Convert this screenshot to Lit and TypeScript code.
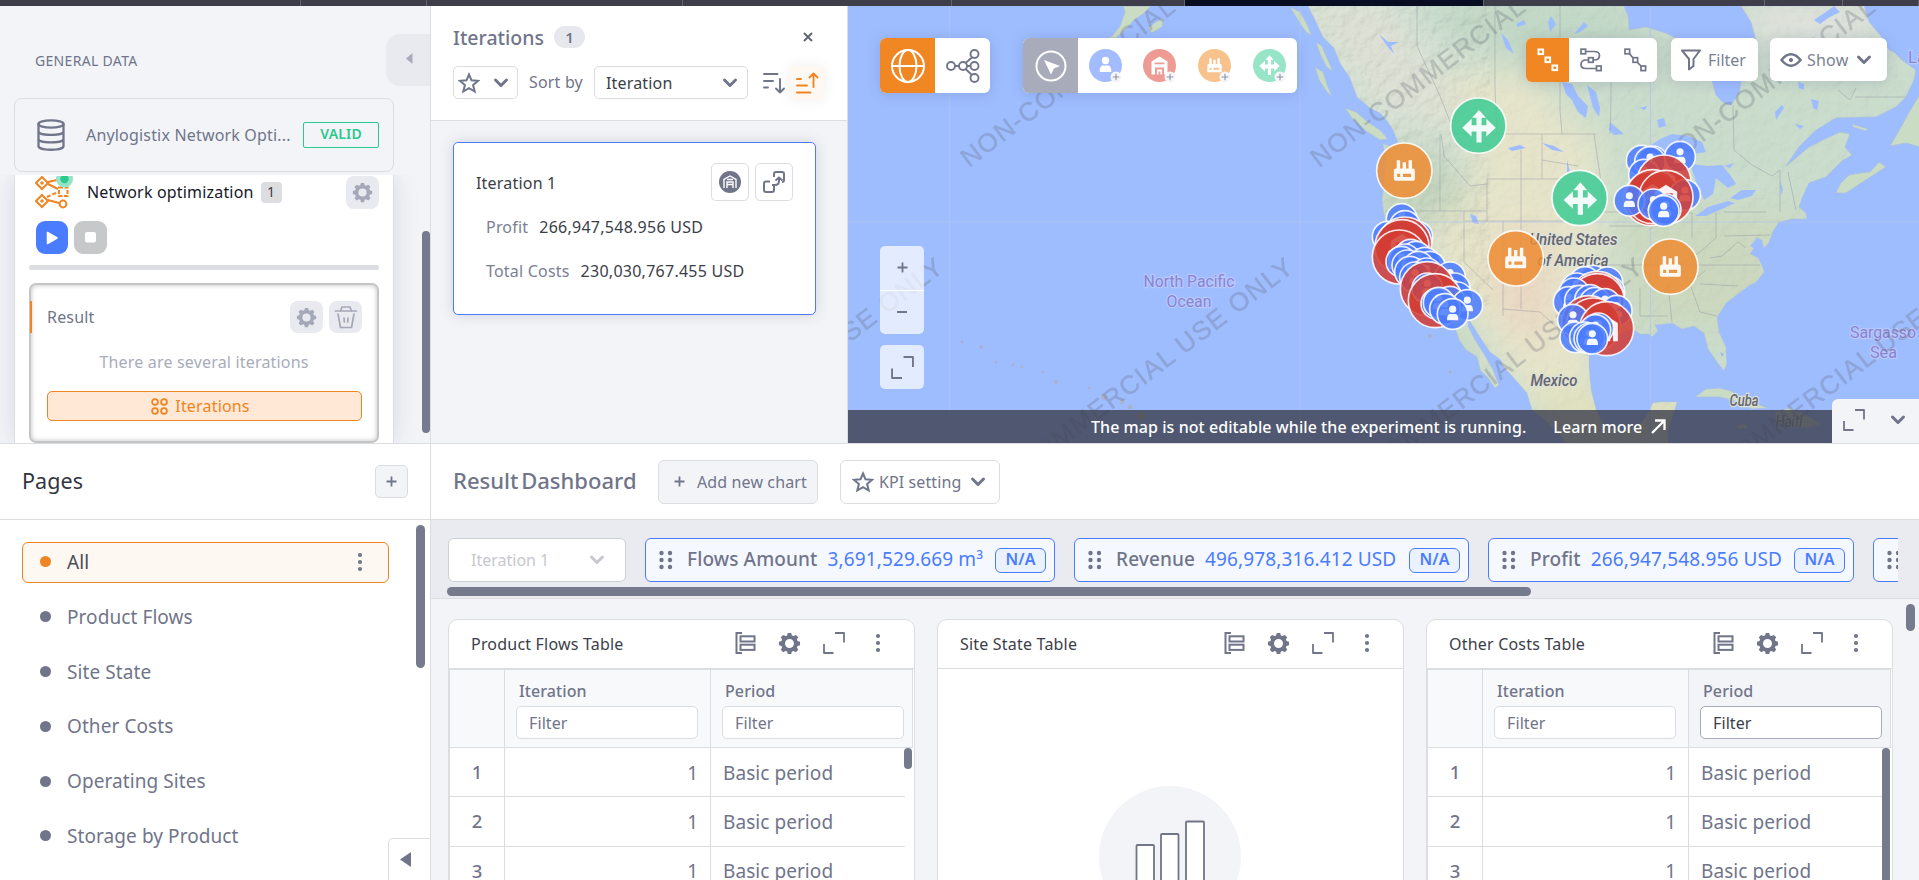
import { LitElement, html, svg, css } from "lit";
import { customElement, property } from "lit/decorators.js";

const base = css`
  * { box-sizing: border-box; }
  svg { display: block; flex: none; }
  .ic { fill: none; stroke: currentColor; stroke-width: 2; stroke-linecap: round; stroke-linejoin: round; }
`;

/* ---------- shared icons ---------- */
const gearPath =
  "M10.2 1h3.6l.7 2.6 1.7.7L18.6 3l2.500 2.500-1.400 2.300.7 1.700 2.600.7v3.600l-2.600.7-.7 1.700 1.400 2.300-2.500 2.500-2.400-1.300-1.700.7-.7 2.600h-3.600l-.7-2.600-1.700-.7L5.400 21l-2.500-2.500 1.400-2.300-.7-1.700L1 13.800v-3.600l2.600-.7.7-1.700L2.900 5.500 5.400 3l2.400 1.300 1.700-.7zM12 7.300a4.700 4.700 0 1 0 0 9.400 4.700 4.700 0 0 0 0-9.400z";
const gear = (s: number) =>
  html`<svg width=${s} height=${s} viewBox="0 0 24 24"><path fill="currentColor" fill-rule="evenodd" d=${gearPath} /></svg>`;
const chevron = (w = 15) =>
  html`<svg class="ic" style="stroke-width:3" width=${w} height=${w} viewBox="0 0 16 16"><path d="M2.500 5 L8 10.500 L13.500 5" /></svg>`;
const star = (w: number) =>
  html`<svg class="ic" style="stroke-linejoin:miter" width=${w} height=${w} viewBox="0 0 22 22"><path d="M11 2.500 L13.500 8.300 L20 8.800 L15.100 13 L16.700 19.500 L11 16.100 L5.300 19.500 L6.900 13 L2 8.800 L8.500 8.300 Z" /></svg>`;
const plus = (s = 11) =>
  html`<svg width=${s} height=${s} viewBox="0 0 11 11" fill="none" stroke="currentColor" stroke-width="1.800"><path d="M5.500 0.500V10.500M0.500 5.500H10.500" /></svg>`;
const expand = (s = 22) =>
  html`<svg width=${s} height=${s} viewBox="0 0 22 22" fill="none" stroke="currentColor" stroke-width="1.800" stroke-linejoin="round"><path d="M12 1H21V10.500M1 12V21H10.500" /></svg>`;
const dotsV = html`<svg width="6" height="20" viewBox="0 0 6 20" fill="#70758a"><circle cx="3" cy="3" r="2.100" /><circle cx="3" cy="10" r="2.100" /><circle cx="3" cy="17" r="2.100" /></svg>`;
const grip = html`<svg width="14" height="20" viewBox="0 0 14 20" fill="currentColor"><circle cx="2.500" cy="3" r="2.200"/><circle cx="2.500" cy="10" r="2.200"/><circle cx="2.500" cy="17" r="2.200"/><circle cx="11" cy="3" r="2.200"/><circle cx="11" cy="10" r="2.200"/><circle cx="11" cy="17" r="2.200"/></svg>`;
const gridIc = html`<svg width="21" height="22" viewBox="0 0 21 22" fill="none" stroke="currentColor" stroke-width="2"><path d="M7 1H1.500V21H7" /><rect x="5.500" y="4.300" width="14" height="5.200" /><rect x="5.500" y="12.700" width="14" height="5.200" /></svg>`;

/* ---------- marker glyphs, drawn around 0,0 ---------- */
const person = svg`<circle cx="0" cy="-5" r="3.700"/><path d="M-5.800 6.500V4.500Q-5.300 0 -2.600 0H2.600Q5.300 0 5.800 4.500V6.500Z"/>`;
const factory = svg`<path fill-rule="evenodd" d="M-10 0Q-10 -2 -8 -2H-7.300V-10H-4V-2H-1.600V-8H1.600V-2H4V-10H7.300V-2H8Q10 -2 10 0V8Q10 9.500 8.500 9.500H-8.500Q-10 9.500 -10 8ZM-6.800 3V6H-4V3ZM-1.300 3V6H6.500V3Z"/>`;
const arrows = svg`<path d="M0 -17L7 -9H2.600V-1.500H7.500V-8L17 1L7.500 10V5H2.600V16H-2.600V5H-7.500V10L-17 1L-7.500 -8V-1.500H-2.600V-9H-7Z"/>`;
const house = svg`<path fill-rule="evenodd" d="M-8 9V-4L0 -9L8 -4V9H4.500V2H-4.500V9ZM-4.800 -3V-1.300H4.800V-3ZM-2.600 4H2.600V9H0.900V6H-0.900V9H-2.600Z"/>`;

type Dot = [string, number, number];
const radius: Record<string, number> = { b: 46, r: 81, o: 83, g: 83 };
const fills: Record<string, string> = { b: "#4a7cff", r: "#d33d33", o: "#ee8d33", g: "#3fcc94" };
const sites: Dot[] = [
  ["g", 355, 137], ["o", 133, 272], ["g", 659, 354], ["o", 467, 535], ["o", 931, 560],
  ["b", 845, 242], ["b", 878, 244], ["b", 870, 246], ["b", 960, 230], ["b", 852, 284],
  ["r", 912, 306], ["r", 872, 356], ["r", 878, 350], ["b", 975, 345], ["r", 918, 352], ["b", 808, 362],
  ["b", 880, 373], ["b", 917, 388], ["b", 911, 393],
  ["b", 125, 417], ["b", 135, 438], ["b", 83, 470], ["b", 172, 470], ["b", 120, 470],
  ["r", 134, 492], ["r", 126, 500], ["r", 118, 531],
  ["b", 152, 524], ["b", 168, 530], ["b", 135, 538], ["b", 124, 545], ["b", 195, 548], ["b", 210, 560], ["b", 142, 556],
  ["b", 175, 560], ["b", 150, 575], ["b", 200, 580], ["b", 165, 592],
  ["b", 270, 592], ["b", 284, 625], ["b", 292, 652], ["r", 202, 626], ["b", 202, 625], ["r", 226, 662], ["b", 270, 665], ["b", 322, 675],
  ["b", 229, 671], ["b", 236, 668], ["b", 255, 687], ["b", 278, 702],
  ["b", 700, 602], ["b", 675, 606], ["b", 742, 607], ["b", 650, 625], ["b", 748, 635],
  ["r", 712, 655], ["r", 712, 662], ["b", 642, 640], ["b", 626, 666], ["b", 660, 662], ["b", 690, 660], ["b", 705, 668], ["b", 735, 672], ["b", 770, 692],
  ["r", 686, 728], ["r", 700, 735], ["b", 639, 719], ["r", 740, 746],
  ["b", 646, 772], ["b", 715, 745], ["b", 706, 750], ["b", 675, 772], ["b", 688, 775], ["b", 697, 776],
];
const glyphFor: Record<string, unknown> = {
  b: svg`<g transform="scale(2.900)">${person}</g>`,
  r: svg`<g transform="scale(4.200)">${house}</g>`,
  o: svg`<g transform="scale(3.150)">${factory}</g>`,
  g: svg`<g transform="translate(2 3) scale(2.950)">${arrows}</g>`,
};

const tiles: [number, number][] = [];
for (const x of [619, 969, 1319, 1669]) for (const y of [168, 518]) tiles.push([x, y]);

const land =
  "M1308 6L1316 22 1323 37 1334 48 1340 63 1350 78 1357 97 1370 108 1380 113 1388 122 1393 130 1398 142 1390 146 1383 144 1386 160 1385 178 1382 200 1384 214 1389 232 1394 246 1405 268 1428 288 1444 306 1455 328 1459 340 1466 350 1477 357 1480 370 1488 378 1495 388 1499 385 1492 368 1484 354 1475 340 1468 326 1468 318 1478 334 1490 352 1501 360 1503 366 1513 377 1527 393 1532 410 1545 420 1560 434 1566 444H1668L1668 430 1674 412 1677 402 1662 402 1653 403 1649 412 1640 425 1625 430 1605 427 1596 410 1591 390 1589 367 1589 356 1598 343 1614 336 1632 329 1640 334 1649 334 1652 337 1658 331 1655 325 1672 323 1682 329 1694 326 1704 333 1708 349 1719 365 1724 371 1727 364 1726 347 1719 332 1717 317 1726 303 1739 293 1750 285 1756 282 1764 272 1762 266 1758 258 1750 254 1755 246 1756 237 1762 240 1764 248 1769 242 1773 231 1779 222 1792 219 1807 219 1806 213 1799 207 1803 196 1809 183 1826 177 1842 161 1852 155 1845 147 1850 134 1840 132 1829 137 1809 147 1786 166 1799 147 1815 131 1826 124 1836 118 1876 117 1896 107 1906 97 1914 80 1916 70 1902 60 1894 52 1889 50 1881 36 1869 22 1864 6H1741L1751 22 1756 40 1750 60 1742 76 1739 93 1731 105 1724 103 1716 95 1712 80 1690 60 1680 40 1666 33 1646 27 1629 30 1628 16 1624 6Z";

@customElement("world-map")
export class WorldMap extends LitElement {
  static styles = [base, css`
    :host { display: block; width: 1071px; height: 437px; overflow: hidden; }
    .wm { font-family: "Liberation Sans", Arial, sans-serif; font-size: 26px; fill: #5f6472; stroke: #5f6472; stroke-width: .5; opacity: .27; }
    .sea { font-family: Roboto, sans-serif; font-size: 16.500px; fill: #8a84d2; stroke: #b9c9fc; stroke-width: 2.500; paint-order: stroke; text-anchor: middle; }
    .country { font-family: Roboto, sans-serif; font-size: 16.500px; font-weight: 500; font-style: italic; fill: #65656f; stroke: #dde2d8; stroke-width: 2.500; paint-order: stroke; text-anchor: middle; }
    .water { fill: #9ebdff; }
    .border { fill: none; stroke: #92909f; stroke-width: 1; opacity: .42; }
  `];
  render() {
    return html`<svg width="1071" height="437" viewBox="848 6 1071 437">
      <defs>
        <clipPath id="landclip"><path d=${land} /></clipPath>
        <filter id="soft" x="-50%" y="-50%" width="200%" height="200%"><feGaussianBlur stdDeviation="16" /></filter>
        <filter id="relief" x="0" y="0" width="100%" height="100%">
          <feTurbulence type="fractalNoise" baseFrequency=".09" numOctaves="4" seed="7" result="n" />
          <feDiffuseLighting in="n" surfaceScale="2.200" diffuseConstant="1.050" lighting-color="#fff"><feDistantLight azimuth="225" elevation="55" /></feDiffuseLighting>
        </filter>
      </defs>
      <rect x="848" y="6" width="1071" height="437" fill="#9ebdff" />
      <path d=${land} fill="#c6dac8" stroke="#a9bfe0" stroke-width="1" />
      <g clip-path="url(#landclip)">
        <g filter="url(#soft)">
          <path fill="#dfe2d6" d="M1300 0H1380L1470 110 1440 130 1380 110Z" />
          <path fill="#c2d8c6" d="M1400 0H1640V60L1560 70 1470 50Z" />
          <path fill="#e6e5cb" d="M1445 75L1530 70 1560 110 1600 140 1605 250 1590 320 1600 420 1530 410 1480 330 1440 290 1420 240 1440 190 1480 180Z" />
          <path fill="#c4d6c0" d="M1380 140L1440 150 1470 200 1420 230 1380 220Z" />
          <path fill="#ead9c4" d="M1500 230H1550V320L1530 350 1490 300Z" />
          <path fill="#ccd9c0" d="M1620 210H1800V330H1630Z" />
          <path fill="#dfe2dc" d="M1740 0H1880V50H1760Z" />
          <path fill="#dfe1bd" d="M1540 390H1690V450H1550Z" />
        </g>
        <rect x="1290" y="6" width="200" height="300" filter="url(#relief)" opacity=".26" style="mix-blend-mode:multiply" />
        <rect x="1480" y="6" width="439" height="437" filter="url(#relief)" opacity=".1" style="mix-blend-mode:multiply" />
      </g>
      <g fill="#cbdcc4" stroke="#a9bfe0" stroke-width=".8">
        <path d="M1345 108L1356 112 1368 122 1380 130 1388 139 1380 140 1366 131 1352 118Z" />
        <path d="M1315 67L1323 72 1327 84 1332 97 1327 92 1319 80Z" />
        <path d="M1290 7L1300 12 1306 22 1312 36 1306 32 1299 22Z" />
        <path d="M1316 42L1322 46 1328 60 1333 72 1326 66 1320 54Z" />
        <path d="M1836 193L1840 184 1849 175 1860 173 1870 172 1879 162 1886 167 1872 176 1858 185 1846 193Z" />
        <path d="M1920 94L1908 114 1901 127 1890 146 1906 143 1920 147Z" />
        <path d="M1852 124L1868 129 1866 131 1853 127Z" />
        <path d="M1100 43L1112 36 1120 26 1125 12 1123 6H1151L1143 14 1134 20 1126 29 1116 38 1107 45Z" />
        <path d="M1148 28L1156 22 1163 18 1162 27 1152 33Z" />
        <path d="M1695 397L1706 389 1720 388 1731 391 1742 397 1760 405 1768 408 1752 409 1735 401 1720 397Z" />
        <path d="M1775 412L1790 408 1808 416 1822 424 1806 428 1790 426 1776 424Z" />
        <path d="M1736 425L1745 424 1748 428 1738 429Z" />
      </g>
      <g class="water">
        <path d="M1644 150L1660 139 1672 134 1688 136 1702 142 1706 152 1694 154 1680 148 1668 158 1652 156Z" />
        <path d="M1690 164L1708 166 1722 165 1731 176 1736 184 1728 188 1716 178 1713 194 1704 200 1697 184Z" />
        <path d="M1664 170L1676 166 1672 200 1662 214 1656 200Z" />
        <path d="M1695 216L1708 207 1728 201 1735 203 1722 209 1706 216Z" />
        <path d="M1730 198L1742 190 1756 190 1752 196 1738 200Z" />
        <path d="M1562 82L1572 84 1578 96 1588 106 1586 118 1578 112 1572 100 1566 94Z" />
        <path d="M1587 85L1596 92 1600 108 1599 117 1593 108Z" />
        <path d="M1379 34L1388 42 1399 42 1391 46 1394 54 1387 46Z" />
        <path d="M1501 33L1508 40 1514 54 1506 48Z" /><path d="M1516 24L1524 20 1526 24 1518 27Z" />
        <path d="M1574 34L1584 22 1588 26 1580 32Z" /><path d="M1551 16L1556 24 1550 32 1548 22Z" />
        <path d="M1610 122L1617 128 1624 134 1614 135 1609 130Z" /><path d="M1657 120L1664 118 1666 126 1659 128Z" />
        <path d="M1508 148L1520 145 1526 148 1512 151Z" /><path d="M1542 143L1554 146 1564 152 1552 150Z" />
        <path d="M1470 214L1476 216 1479 224 1473 223Z" /><path d="M1567 160L1570 172 1567 176Z" />
        <path d="M1775 112L1782 105 1784 108 1776 120Z" /><path d="M1811 99L1819 101 1817 110 1813 108Z" />
        <path d="M1798 82L1804 84 1804 90 1799 88Z" /><path d="M1795 124L1804 126 1800 129Z" />
        <path d="M1639 108L1647 106 1645 110Z" /><path d="M1724 166L1734 163 1730 168Z" />
        <path d="M1757 238L1761 244 1760 258 1756 250 1750 246Z" /><path d="M1780 180L1783 190 1781 195Z" />
        <path d="M1814 20L1826 12 1834 6 1840 12 1828 18 1820 24Z" /><path d="M1720 352L1724 354 1722 357Z" />
      </g>
      <path class="border" d="M1417 6V46L1440 96 1455 134H1596M1495 6V90L1497 134M1542 134V179H1580M1487 179H1542M1487 179V221H1465M1441 134L1444 156 1458 172 1470 186 1487 184M1440 134V211M1386 211H1487M1464 211V262L1493 290M1487 221H1521V309M1503 221V316M1521 221H1570M1521 221V150M1503 309L1540 312 1560 330 1588 356M1560 6V110L1562 134M1542 160L1578 166M1594 134L1600 175 1604 212H1640M1609 226H1650M1610 134L1611 100V80L1640 60M1598 265H1760M1640 288V316H1668M1668 284L1672 322M1690 284L1700 312 1717 316M1649 230L1668 214 1692 213V214M1692 214V238M1716 212V238L1700 252 1672 270M1724 212H1766M1724 236L1770 235M1733 105L1734 150 1752 165 1772 176 1780 170M1780 170V212M1788 172L1796 210M1700 284L1738 286M1838 90L1850 100 1856 88M1855 97H1906M1690 283L1706 270M1710 258L1722 256 1738 242 1746 248M1620 316H1590" />
      <g fill="#abb2c6" opacity=".85"><circle cx="962" cy="342" r="1.500"/><circle cx="981" cy="347" r="2"/><circle cx="996" cy="362" r="1.500"/><circle cx="1013" cy="365" r="1.500"/><circle cx="1022" cy="367" r="1.500"/><circle cx="1043" cy="372" r="1.500"/><circle cx="1056" cy="382" r="2"/><circle cx="1089" cy="388" r="1.500"/><circle cx="1104" cy="397" r="3"/><circle cx="1122" cy="402" r="2.500"/><circle cx="1130" cy="407" r="2.500"/><circle cx="1141" cy="416" r="4" fill="#c9b98f"/><circle cx="1430" cy="336" r="2"/><circle cx="1450" cy="372" r="1.500"/></g>
      <path d="M949.500 6V443M1300 6V443M1650.500 6V443M848 222H1919" stroke="#b3c5ef" stroke-width="1.200" opacity=".7" />
      <text class="country" x="1573.500" y="245" textLength="88" lengthAdjust="spacingAndGlyphs">United States</text>
      <text class="country" x="1573" y="266" textLength="71" lengthAdjust="spacingAndGlyphs">of America</text>
      <text class="country" x="1554" y="386" textLength="47" lengthAdjust="spacingAndGlyphs">Mexico</text>
      <text class="country" x="1744" y="406" textLength="29" lengthAdjust="spacingAndGlyphs">Cuba</text>
      <text class="country" x="1789" y="427" textLength="27" lengthAdjust="spacingAndGlyphs" opacity=".6">Haiti</text>
      <text class="sea" x="1189" y="287" textLength="91" lengthAdjust="spacingAndGlyphs">North Pacific</text>
      <text class="sea" x="1189" y="307" textLength="45" lengthAdjust="spacingAndGlyphs">Ocean</text>
      <text class="sea" x="1883" y="338" textLength="66" lengthAdjust="spacingAndGlyphs">Sargasso</text>
      <text class="sea" x="1883.500" y="358" textLength="27" lengthAdjust="spacingAndGlyphs">Sea</text>
      <text class="sea" x="1917" y="63">La</text>
      ${tiles.map(([x, y]) => svg`<text class="wm" transform="translate(${x} ${y}) rotate(-37.200)" textLength="409">NON-COMMERCIAL USE ONLY</text>`)}
      <g transform="translate(1360 80) scale(.33333)">
        ${sites.map(([k, x, y]) => svg`<g transform="translate(${x} ${y})"><circle r=${radius[k]} fill=${fills[k]} fill-opacity=".86" stroke="#fff" stroke-opacity=".88" stroke-width="5"/><g fill="#fff" fill-opacity=".93">${glyphFor[k]}</g></g>`)}
      </g>
    </svg>`;
  }
}

interface Table { title: string; kind: "rows" | "empty"; active?: boolean; }

@customElement("chart-card")
export class ChartCard extends LitElement {
  @property({ attribute: false }) table!: Table;
  static styles = [base, css`
    :host { display: block; width: 467px; flex: none; }
    .card { height: 300px; background: #fff; border: 1px solid #dcdde1; border-radius: 10px 10px 0 0; color: #70758a; }
    .head { height: 49px; display: flex; align-items: center; padding: 0 33px 0 22px; border-bottom: 1px solid #dcdde1; font-size: 16px; color: #3b3e48; letter-spacing: .2px; }
    .head span { flex: 1; }
    .icons { display: flex; align-items: center; color: #70758a; padding-bottom: 2px; }
    .icons > :nth-child(2) { margin-left: 22px; } .icons > :nth-child(3) { margin-left: 22px; } .icons > :nth-child(4) { margin-left: 30px; }
    .body { display: grid; grid-template-columns: 55px 206px 202px; border-top: 1px solid #dcdde1; border-left: 1px solid #dcdde1; width: 464px; }
    .th { height: 78px; background: #f8f9fb; border-right: 1px solid #dcdde1; border-bottom: 1px solid #dcdde1; padding: 10px 11px 0 11px; font-size: 16px; font-weight: 500; }
    .th label { display: block; line-height: 23px; padding-left: 3px; height: 26px; letter-spacing: .1px; }
    .inp { height: 33px; width: 182px; border: 1px solid #dcdde1; border-radius: 5px; background: #fff; padding-left: 12px; line-height: 32px; font-weight: 400; letter-spacing: .1px; }
    .active { background: #f3f4f8; }
    .active .inp { border-color: #a9abba; color: #3b3e48; }
    .rows { display: flex; height: 133px; }
    .grid { display: grid; grid-template-columns: 55px 206px 194px; grid-auto-rows: 49.300px; border-left: 1px solid #dcdde1; overflow: hidden; }
    .td { border-right: 1px solid #dcdde1; border-bottom: 1px solid #dcdde1; font-size: 19px; display: flex; align-items: center; padding-top: 1px; }
    .n { justify-content: center; font-weight: 500; font-size: 18.500px; padding: 0 0 1px; }
    .r { justify-content: flex-end; padding-right: 12px; }
    .l { padding-left: 12px; border-right: 0; letter-spacing: .06px; }
    .bar { width: 8px; margin-left: -1px; border-radius: 4px; background: #757a8c; height: 21px; }
    .bar.long { height: 160px; }
    .empty { display: flex; justify-content: center; padding: 117px 2px 0 0; }
  `];
  render() {
    const t = this.table;
    return html`<div class="card">
      <div class="head"><span>${t.title}</span><div class="icons">${gridIc}${gear(23)}${expand(22)}${dotsV}</div></div>
      ${t.kind === "rows"
        ? html`<div class="body">
              <div class="th"></div>
              <div class="th"><label>Iteration</label><div class="inp">Filter</div></div>
              <div class="th ${t.active ? "active" : ""}"><label>Period</label><div class="inp">Filter</div></div>
            </div>
            <div class="rows">
              <div class="grid">${[1, 2, 3].map((n) => html`<div class="td n">${n}</div><div class="td r">1</div><div class="td l">Basic period</div>`)}</div>
              <div class="bar ${t.active ? "long" : ""}"></div>
            </div>`
        : html`<div class="empty"><svg width="142" height="142" viewBox="0 0 142 142"><circle cx="71" cy="71" r="71" fill="#f3f4f8" /><g fill="#fff" stroke="#70758a" stroke-width="1.800"><rect x="37.500" y="59" width="17.500" height="60" rx="1"/><rect x="62" y="48" width="17.500" height="71" rx="1"/><rect x="87" y="35.500" width="18" height="84" rx="1"/></g></svg></div>`}
    </div>`;
  }
}

const miniPin = (fill: string, glyph: unknown) => html`<svg width="35" height="35" viewBox="-17.500 -17.500 35 35">
  <circle r="16.500" fill=${fill} /><g fill="#fff">${glyph}</g>
  <circle cx="10.500" cy="11.500" r="5.500" fill="#f6f7fa" /><path d="M10.500 8.200V14.800M7.200 11.500H13.800" stroke="#8e93a3" stroke-width="1.100" /></svg>`;

@customElement("app-root")
export class AppRoot extends LitElement {
  static styles = [base, css`
    :host { display: grid; grid-template-columns: 1919px; grid-template-rows: 6px 437px 437px; width: 1919px; height: 880px; overflow: hidden; background: #f3f4f8; font-family: "Noto Sans", sans-serif; font-size: 16px; color: #70758a; }
    .top { display: flex; background: #3d3e4a; }
    .top i { border-right: 1px solid #62636e; }
    .top .on { background: #080d22; }
    .upper { display: flex; min-height: 0; border-bottom: 1px solid #dcdde1; height: 438px; }
    .lower { display: flex; min-height: 0; padding-top: 1px; }

    .side { width: 431px; border-right: 1px solid #dcdde1; display: flex; flex-direction: column; flex: none; overflow: hidden; letter-spacing: .18px; }
    .shead { height: 169px; flex: none; background: #f3f4f8; z-index: 1; }
    .srow { display: flex; justify-content: space-between; padding: 28px 0 0 35px; height: 92px; }
    .srow span { font-size: 14px; line-height: 20px; padding-top: 17px; letter-spacing: .32px; }
    .tab { width: 44px; height: 52px; border-radius: 14px 0 0 14px; background: #e9eaef; color: #a9acba; padding: 19px 0 0 19px; }
    .project { margin-left: 14px; width: 380px; height: 74px; border: 1px solid #dcdde1; border-radius: 8px; display: flex; align-items: center; padding: 0 14px 0 22px; }
    .project .nm { flex: 1; margin-left: 21px; white-space: nowrap; }
    .valid { width: 76px; height: 26px; border: 1px solid #2bc88f; border-radius: 2px; color: #2bc88f; font-size: 14px; font-weight: 600; display: flex; align-items: center; justify-content: center; padding-bottom: 3px; }
    .sbody { display: flex; flex: 1; justify-content: space-between; padding-left: 14px; overflow: hidden; }
    .exp { width: 380px; background: #fff; border: solid #dcdde1; border-width: 0 1px; padding: 1px 14px 0; box-shadow: 0 0 24px rgba(60,64,90,.13); overflow: hidden; height: 268px; }
    .track { width: 8px; height: 202px; margin-top: 56px; background: #757a8c; border-radius: 4px; }
    .row { display: flex; align-items: center; }
    .sq { width: 33px; height: 33px; border-radius: 8px; background: #e9eaef; color: #a5a8b8; display: flex; align-items: center; justify-content: center; }
    .exp .nm { color: #17182a; padding-bottom: 1px; }
    .cnt { margin-left: 7px; width: 21px; height: 21px; border-radius: 4px; background: #dcdde0; color: #3b3e48; font-size: 14px; line-height: 20px; text-align: center; margin-right: auto; }
    .runs { display: flex; gap: 6px; padding: 12px 0 0 7px; }
    .run { width: 33px; height: 33px; border-radius: 9px; display: flex; align-items: center; justify-content: center; background: #c6c8c9; }
    .run.play { background: #4a7cff; width: 32px; }
    .prog { height: 5px; border-radius: 3px; background: #dcdde0; margin-top: 11px; }
    .result { margin-top: 13px; height: 160px; width: 350px; border: 2px solid #c4c5c6; border-radius: 7px; box-shadow: inset 0 0 5px rgba(0,0,0,.25); padding: 16px 15px 0 0; }
    .rt { display: flex; height: 32px; gap: 6px; border-left: 2px solid #ef8522; margin-left: -1px; padding-left: 15px; align-items: center; }
    .rt .sq { height: 32px; }
    .rt span { flex: 1; }
    .msg { text-align: center; color: #a9acba; margin: 18px 0 0 15px; line-height: 22px; }
    .itb { height: 30px; margin: 18px 0 0 16px; border: 1px solid #ef8522; border-radius: 5px; background: #ffe8d5; color: #ef8522; display: flex; align-items: center; justify-content: center; gap: 7px; padding-right: 8px; }

    .iter { width: 417px; flex: none; border-right: 1px solid #dcdde1; }
    .ihead { height: 115px; border-bottom: 1px solid #dcdde1; background: #fff; padding: 19px 22px 0; }
    .ititle { display: flex; align-items: center; height: 24px; font-size: 19.500px; font-weight: 500; }
    .ititle b { margin-left: 10px; width: 31px; height: 22px; border-radius: 11px; background: #e7e8ed; font-size: 15px; font-weight: 600; line-height: 22px; text-align: center; margin-right: auto; }
    .box { border: 1px solid #dcdde1; border-radius: 5px; background: #fff; display: flex; align-items: center; }
    .tools { display: flex; align-items: center; margin-top: 17px; height: 33px; letter-spacing: .18px; }
    .hl { width: 34px; height: 33px; background: #fef8f2; box-shadow: 0 0 14px rgba(0,0,0,.07); color: #ef8522; display: flex; align-items: center; justify-content: center; }
    .icard { margin: 21px 0 0 22px; width: 363px; height: 173px; border: 1px solid #4a7cff; border-radius: 5px; background: #fff; box-shadow: 0 0 14px rgba(60,64,90,.18); padding: 20px 22px 0 22px; color: #3b3e48; letter-spacing: .2px; }
    .icard .ir { display: flex; align-items: center; gap: 6px; height: 38px; }
    .icard .ir span { flex: 1; padding-top: 1px; }
    .icard .ib { width: 38px; height: 38px; justify-content: center; color: #70758a; }
    .kv { display: flex; gap: 11px; padding-left: 10px; line-height: 22px; margin-top: 22px; }
    .kv.first { margin-top: 15px; }
    .kv b { font-weight: 400; letter-spacing: .26px; }
    .kv i { font-style: normal; color: #7c8094; letter-spacing: .2px; }

    .mapw { position: relative; width: 1071px; height: 437px; }
    .over { position: absolute; display: flex; }
    .tb { border-radius: 6px; background: #fff; overflow: hidden; box-shadow: 0 1px 14px rgba(50,60,110,.18); }
    .c { display: flex; align-items: center; justify-content: center; height: 100%; }
    .or { background: #f08722; color: #fff; }
    .gr { background: #a7abba; color: #fff; }
    .zoom { flex-direction: column; width: 44px; background: rgba(255,255,255,.7); border-radius: 5px; }
    .zoom .c + .c { border-top: 1px solid #fff; }
    .notice { left: 0; right: 0; bottom: 0; height: 33px; background: rgba(60,63,78,.8); color: #fff; font-weight: 500; align-items: center; padding-left: 243px; white-space: nowrap; letter-spacing: .06px; }
    .corner { right: 0; bottom: 0; width: 87px; height: 44px; background: #f3f4f8; border-radius: 6px 0 0 0; align-items: center; padding: 0 13px 2px 11px; justify-content: space-between; }

    .pages { width: 431px; flex: none; border-right: 1px solid #dcdde1; background: #fff; position: relative; }
    .phead { height: 76px; border-bottom: 1px solid #dcdde1; display: flex; align-items: center; justify-content: space-between; padding: 0 22px 1px 22px; color: #33363f; }
    .phead span { font-size: 21.500px; line-height: 28px; padding-bottom: 1px; letter-spacing: .1px; }
    .add { width: 33px; height: 33px; border: 1px solid #dcdde1; border-radius: 5px; background: #f3f4f8; color: #70758a; display: flex; align-items: center; justify-content: center; }
    .plist { display: flex; justify-content: space-between; padding: 5px 5px 0 22px; }
    .pl { width: 367px; padding-top: 17px; display: flex; flex-direction: column; gap: 13.800px; }
    .p { height: 41px; border: 1px solid transparent; border-radius: 6px; display: flex; align-items: center; font-size: 19px; padding: 0 25px 1px 17px; gap: 16px; letter-spacing: .08px; }
    .p::before { content: ""; width: 11px; height: 11px; border-radius: 50%; background: #70758a; }
    .p.on { background: #fef8f2; border-color: #ef8522; color: #4a4d58; padding-bottom: 2px; }
    .p.on::before { background: #ef8522; }
    .p span { flex: 1; }
    .ptrack { width: 9px; height: 143px; border-radius: 5px; background: #757a8c; }
    .fold { position: absolute; right: 0; bottom: 0; width: 42px; height: 42px; border: solid #dcdde1; border-width: 1px 0 0 1px; border-radius: 5px 0 0 0; background: #fff; padding: 13px 0 0 11px; }

    .dash { flex: 1; min-width: 0; display: flex; flex-direction: column; }
    .dhead { height: 76px; flex: none; background: #fff; border-bottom: 1px solid #dcdde1; display: flex; align-items: center; padding-left: 22px; }
    .dhead h2 { margin: 0 23px 0 0; font-size: 22px; font-weight: 500; word-spacing: -3px; white-space: nowrap; width: 182px; letter-spacing: .01px; padding-bottom: 3px; }
    .btn { height: 44px; border: 1px solid #dcdde1; border-radius: 6px; display: flex; align-items: center; white-space: nowrap; }
    .kpis { height: 79px; flex: none; background: #eaebf0; border-bottom: 1px solid #dcdde1; padding: 18px 21px 0 17px; }
    .kl { display: flex; overflow: hidden; }
    .kl > * { flex: none; height: 44px; border-radius: 6px; display: flex; align-items: center; white-space: nowrap; }
    .sel { width: 178px; border: 1px solid #cfd0d3; background: #fff; color: #c6c8cd; padding: 0 20px 0 22px; justify-content: space-between; margin-right: 19px; }
    .k { border: 1px solid #4a7cff; background: #f5f8ff; font-size: 19px; padding: 0 8px 0 13px; margin-right: 19px; font-weight: 500; overflow: hidden; }
    .k span { margin: 0 10px 0 14px; white-space: nowrap; padding-bottom: 2px; letter-spacing: .12px; }
    .k em { font-style: normal; color: #4a7cff; font-weight: 400; flex: 1; padding-bottom: 2px; letter-spacing: .13px; }
    .k em sup { font-size: 12px; line-height: 0; vertical-align: 7px; font-weight: 500; }
    .k b { width: 51px; height: 25px; border: 1.500px solid #4a7cff; border-radius: 6px; background: #eaf1ff; color: #4a7cff; font-size: 16px; line-height: 21px; text-align: center; font-weight: 600; }
    .hbar { width: 1084px; height: 9px; margin: 5px 0 0 -1px; border-radius: 5px; background: #757a8c; }
    .charts { display: flex; gap: 22px; padding: 20px 0 0 17px; }
    .vbar { width: 9px; height: 27px; border-radius: 5px; background: #757a8c; margin: -15px 0 0 -9px; }
  `];

  pages = ["All", "Product Flows", "Site State", "Other Costs", "Operating Sites", "Storage by Product"];
  tabs = [301, 126, 256, 269, 233, 299, 281, 78, 76];
  kpis = [
    { n: "Flows Amount", v: html`3,691,529.669 m<sup>3</sup>`, w: 410 },
    { n: "Revenue", v: "496,978,316.412 USD", w: 395 },
    { n: "Profit", v: "266,947,548.956 USD", w: 366 },
    { n: "", v: "", w: 366 },
  ];
  tables: Table[] = [
    { title: "Product Flows Table", kind: "rows" },
    { title: "Site State Table", kind: "empty" },
    { title: "Other Costs Table", kind: "rows", active: true },
  ];

  sidebar() {
    return html`<aside class="side">
      <div class="shead">
        <div class="srow"><span>GENERAL DATA</span><div class="tab"><svg width="8" height="11"><path d="M7.500 0V11L1 5.500Z" fill="currentColor" /></svg></div></div>
        <div class="project">
          <svg class="ic" width="28" height="32" viewBox="0 0 28 32" style="stroke-width:2.300"><ellipse cx="14" cy="5" rx="12.500" ry="3.700"/><path d="M1.500 5V27C1.500 32 26.500 32 26.500 27V5M1.500 12.500C1.500 17 26.500 17 26.500 12.500M1.500 20C1.500 24.500 26.500 24.500 26.500 20"/></svg>
          <span class="nm">Anylogistix Network Opti...</span><div class="valid">VALID</div>
        </div>
      </div>
      <div class="sbody">
        <div class="exp">
          <div class="row" style="padding-left:6px">
            <svg width="38" height="33" viewBox="0 0 38 33" fill="none" stroke="#ef8522" stroke-width="2"><path d="M7 1L13 7L7 13L1 7ZM7 19L13 25L7 31L1 25Z"/><circle cx="7" cy="7" r=".8"/><circle cx="7" cy="25" r=".8"/><path d="M13 6L22 4M13 24L24 27M13 8L23 13" /><path d="M12 21L23 16" stroke-dasharray="4 2"/><rect x="24" y="11.500" width="8.500" height="8.500" stroke-dasharray="4 1.500"/><circle cx="28" cy="28" r="3.400"/><circle cx="29.500" cy="3" r="8.500" fill="#95e4c7" stroke="none"/><circle cx="29.500" cy="3" r="4.200" fill="#2bc88f" stroke="none"/></svg>
            <span class="nm" style="margin-left:14px">Network optimization</span><span class="cnt">1</span><div class="sq">${gear(21)}</div>
          </div>
          <div class="runs">
            <div class="run play"><svg width="14" height="14"><path d="M2.500 1.500V12.500L12 7Z" fill="#fff" stroke="#fff" stroke-width="1.500" stroke-linejoin="round"/></svg></div>
            <div class="run"><svg width="11" height="11"><rect width="11" height="10.500" rx="2" fill="#fff"/></svg></div>
          </div>
          <div class="prog"></div>
          <div class="result">
            <div class="rt"><span>Result</span><div class="sq">${gear(21)}</div><div class="sq"><svg class="ic" style="stroke-width:1.700" width="24" height="24" viewBox="0 0 24 24"><path d="M1.500 6H22.500M6.500 6L8 2H16L17.500 6M4 9L6.500 22.500H17.500L20 9M10 13L10.300 17M14 13L13.700 17"/></svg></div></div>
            <div class="msg">There are several iterations</div>
            <div class="itb"><svg width="17" height="17" viewBox="0 0 17 17" fill="none" stroke="currentColor" stroke-width="1.800"><circle cx="4" cy="4" r="2.900"/><circle cx="13" cy="4" r="2.900"/><circle cx="4" cy="13" r="2.900"/><circle cx="13" cy="13" r="2.900"/></svg>Iterations</div>
          </div>
        </div>
        <div class="track"></div>
      </div>
    </aside>`;
  }

  iterations() {
    return html`<section class="iter">
      <div class="ihead">
        <div class="ititle">Iterations<b>1</b><svg style="margin-right:12px" width="10" height="10" viewBox="0 0 10 10" stroke="#5f6475" stroke-width="1.900"><path d="M1 1L9 9M9 1L1 9"/></svg></div>
        <div class="tools">
          <div class="box" style="width:65px;height:33px;padding:0 8px 0 4px;justify-content:space-between">${star(22)}${chevron(16)}</div>
          <span style="margin:0 11px 1px 11px">Sort by</span>
          <div class="box" style="width:154px;height:33px;padding:0 9px 0 11px;justify-content:space-between;color:#3b3e48">Iteration<span style="color:#70758a">${chevron(16)}</span></div>
          <svg class="ic" style="margin:0 5px 0 15px;stroke-width:1.900" width="22" height="22" viewBox="0 0 22 22"><path d="M1 2H14.500M1 9H10M1 15.500H5M17 7V20.500M13 16.500L17 20.500L21 16.500"/></svg>
          <div class="hl"><svg class="ic" style="stroke-width:1.900" width="24" height="22" viewBox="0 0 24 22"><path d="M2 20.500H15.500M2 13.500H12M2 7H6M18.500 15V1.500M14.500 5.500L18.500 1.500L22.500 5.500"/></svg></div>
        </div>
      </div>
      <div class="icard">
        <div class="ir"><span>Iteration 1</span>
          <div class="box ib"><svg width="22" height="22" viewBox="-11 -11 22 22"><circle r="11" fill="currentColor"/><path d="M-6 6V-2.500L0 -6L6 -2.500V6M-3 6V0H3V6M-3 -2.500H3M-3 2.500H3" fill="none" stroke="#fff" stroke-width="1.400"/></svg></div>
          <div class="box ib"><svg width="22" height="22" viewBox="0 0 22 22" fill="none" stroke="currentColor" stroke-width="2"><path d="M11 6V3Q11 1 13 1H19Q21 1 21 3V9Q21 11 19 11"/><path d="M11 15V19Q11 21 9 21H3Q1 21 1 19V12.500Q1 10.500 3 10.500H7"/><path d="M9 14H12Q16 14 16 10V7M12.500 9.500L16 6.500L19.500 9.500"/></svg></div>
        </div>
        <div class="kv first"><i>Profit</i><b>266,947,548.956 USD</b></div>
        <div class="kv"><i>Total Costs</i><b>230,030,767.455 USD</b></div>
      </div>
    </section>`;
  }

  map() {
    const sq = (x: number, y: number) => svg`<rect x=${x} y=${y} width="4.600" height="4.600"/>`;
    return html`<section class="mapw"><world-map></world-map>
      <div class="over tb" style="left:32px;top:32px;width:110px;height:55px">
        <div class="c or" style="width:55px"><svg width="34" height="34" viewBox="-17 -17 34 34" fill="none" stroke="currentColor" stroke-width="2"><circle r="16"/><ellipse rx="8.500" ry="16"/><path d="M-16 0H16"/></svg></div>
        <div class="c" style="width:55px"><svg width="34" height="34" viewBox="0 0 34 34" fill="none" stroke="currentColor" stroke-width="1.900"><circle cx="5" cy="17" r="4"/><circle cx="17" cy="17" r="4"/><circle cx="28.500" cy="17" r="4"/><circle cx="28.500" cy="5" r="4"/><circle cx="28.500" cy="29" r="4"/><path d="M9 17H13M21 17H24.500M19.500 14L26 8.500M19.500 20L26 26"/></svg></div>
      </div>
      <div class="over tb" style="left:175px;top:32px;width:274px;height:55px">
        <div class="c gr" style="width:55px"><svg width="34" height="34" viewBox="-17 -17 34 34"><circle r="14.500" fill="none" stroke="#fff" stroke-width="2"/><path fill="#fff" d="M-7 -6L9 0L3 2.500L0 8.500Z"/></svg></div>
        <div class="c" style="width:54px">${miniPin("#a3bcff", person)}</div>
        <div class="c" style="width:55px">${miniPin("#ee9b94", house)}</div>
        <div class="c" style="width:55px">${miniPin("#f8c28d", svg`<g transform="scale(.72)">${factory}</g>`)}</div>
        <div class="c" style="width:55px">${miniPin("#97e5c6", svg`<g transform="scale(.6)">${arrows}</g>`)}</div>
      </div>
      <div class="over tb" style="left:678px;top:32px;width:131px;height:44px">
        <div class="c or" style="width:43px"><svg width="22" height="24" viewBox="0 0 22 24" fill="none" stroke="currentColor" stroke-width="2">${sq(1.500, 1.500)}${sq(8.500, 9.500)}${sq(15.500, 17.500)}</svg></div>
        <div class="c" style="width:44px"><svg width="22" height="24" viewBox="0 0 22 24" fill="none" stroke="currentColor" stroke-width="1.700"><path d="M5 3.500H14Q19.500 3.500 19.500 7.500Q19.500 12 14 12H13M8 12H5Q1 12.500 1 16.500Q1 20.500 6 20.500H16"/>${sq(1, 1.200)}${sq(8.500, 9.700)}${sq(16.500, 18)}</svg></div>
        <div class="c" style="width:44px"><svg width="23" height="24" viewBox="0 0 23 24" fill="none" stroke="currentColor" stroke-width="1.700"><path d="M5 5L9 10M13 14L18 19"/>${sq(1, 1.200)}${sq(9, 9.700)}${sq(17, 18)}</svg></div>
      </div>
      <div class="over tb" style="left:823px;top:32px;width:87px;height:43px;align-items:center;padding-left:10px;gap:7px;color:#7c8094"><svg width="20" height="22" viewBox="0 0 20 22" fill="none" stroke="#70758a" stroke-width="2" stroke-linejoin="round"><path d="M1 1.500H19L12.500 10V17L8 20.500V10Z"/></svg>Filter</div>
      <div class="over tb" style="left:922px;top:32px;width:117px;height:43px;align-items:center;padding-left:10px;color:#7c8094;letter-spacing:.2px"><svg width="22" height="14" viewBox="0 0 22 14" fill="none" stroke="#70758a" stroke-width="2.400"><path d="M1.500 7Q6 1.300 11 1.300T20.500 7Q16 12.700 11 12.700T1.500 7Z"/><circle cx="11" cy="7" r="1.600" fill="#70758a" stroke-width="1"/></svg><span style="margin:0 8px 0 5px">Show</span><span style="color:#70758a">${chevron(16)}</span></div>
      <div class="over zoom" style="left:32px;top:240px;height:88px"><div class="c">${plus(11)}</div><div class="c"><svg width="10" height="2"><rect width="10" height="2" fill="currentColor"/></svg></div></div>
      <div class="over zoom" style="left:32px;top:339px;height:44px"><div class="c">${expand(23)}</div></div>
      <div class="over notice">The map is not editable while the experiment is running.<span style="margin:0 9px 0 27px">Learn more</span><svg width="15" height="15" viewBox="0 0 15 15" fill="none" stroke="#fff" stroke-width="2.300"><path d="M4 1.500H13.500V11M13 2L1 14"/></svg></div>
      <div class="over corner">${expand(22)}${chevron(16)}</div>
    </section>`;
  }

  render() {
    return html`
      <div class="top">${this.tabs.map((w, i) => html`<i class=${i === 5 ? "on" : ""} style="width:${w}px"></i>`)}</div>
      <div class="upper">${this.sidebar()}${this.iterations()}${this.map()}</div>
      <div class="lower">
        <aside class="pages">
          <div class="phead"><span>Pages</span><div class="add">${plus(11)}</div></div>
          <div class="plist">
            <div class="pl">${this.pages.map((p, i) => html`<div class="p ${i === 0 ? "on" : ""}"><span>${p}</span>${i === 0 ? dotsV : ""}</div>`)}</div>
            <div class="ptrack"></div>
          </div>
          <div class="fold"><svg width="11" height="15"><path d="M11 0V15L0 7.500Z" fill="#70758a"/></svg></div>
        </aside>
        <main class="dash">
          <div class="dhead"><h2>Result Dashboard</h2>
            <div class="btn" style="width:160px;background:#f3f4f8;padding-left:15px;gap:12px;letter-spacing:.12px">${plus(11)}<span>Add new chart</span></div>
            <div class="btn" style="width:160px;margin-left:22px;padding-left:11px;gap:5px;letter-spacing:.1px">${star(22)}<span>KPI setting</span><span style="margin-left:4px">${chevron(16)}</span></div>
          </div>
          <div class="kpis">
            <div class="kl"><div class="sel">Iteration 1${chevron(16)}</div>
              ${this.kpis.map((k) => html`<div class="k" style="width:${k.w}px">${grip}${k.n ? html`<span>${k.n}</span><em>${k.v}</em><b>N/A</b>` : ""}</div>`)}
            </div>
            <div class="hbar"></div>
          </div>
          <div class="charts">${this.tables.map((t) => html`<chart-card .table=${t}></chart-card>`)}<div class="vbar"></div></div>
        </main>
      </div>`;
  }
}
